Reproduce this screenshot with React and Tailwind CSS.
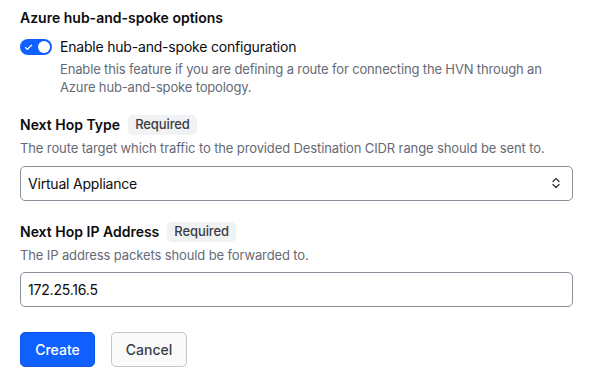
import { Check } from "lucide-react";

const font = { fontFamily: "Inter, 'Noto Sans', sans-serif" };

const Badge = ({ children }) => (
    <span className="inline-flex h-5 items-center rounded-[5px] bg-[#f1f2f3] px-[7px] text-[13px] font-medium tracking-[-0.1px] text-[#3b3d45]">
        {children}
    </span>
);

const FieldLabel = ({ label }) => (
    <div className="flex items-center gap-2">
        <span className="text-[14px] font-semibold leading-5 text-[#0c0c0e]">{label}</span>
        <Badge>Required</Badge>
    </div>
);

const Helper = ({ children }) => (
    <p className="mt-1 text-[13px] leading-[18px] tracking-[-0.12px] text-[#656a76]">{children}</p>
);

const Toggle = () => (
    <button
        type="button"
        aria-pressed="true"
        className="relative flex h-4 w-8 shrink-0 items-center rounded-full bg-[#1060ff]"
    >
        <Check size={9} strokeWidth={3.5} className="absolute left-[4px] text-white" />
        <span className="absolute right-[2px] size-3 rounded-full bg-white" />
    </button>
);

const App = () => {
    return (
        <div className="min-h-screen bg-white pl-5 pr-[21px] pt-2" style={font}>
            <h3 className="text-[14px] font-semibold leading-5 text-[#0c0c0e]">
                Azure hub-and-spoke options
            </h3>

            <div className="mt-[9px]">
                <div className="flex items-center gap-2">
                    <Toggle />
                    <span className="text-[14px] leading-5 tracking-[-0.2px] text-[#0c0c0e]">
                        Enable hub-and-spoke configuration
                    </span>
                </div>
                <p className="ml-10 mt-[3px] text-[13px] leading-[18px] tracking-[-0.15px] text-[#656a76]">
                    Enable this feature if you are defining a route for connecting the HVN through an
                    Azure hub-and-spoke topology.
                </p>
            </div>

            <div className="mt-[19px]">
                <FieldLabel label="Next Hop Type" />
                <Helper>
                    The route target which traffic to the provided Destination CIDR range should be sent to.
                </Helper>
                <div className="relative mt-[9px]">
                    <div className="flex h-[35px] items-center rounded-[5px] border border-[#8c909c] px-[7px] text-[14px] tracking-[-0.2px] text-[#0c0c0e]">
                        Virtual Appliance
                    </div>
                    <svg
                        width="10"
                        height="12"
                        viewBox="0 0 10 12"
                        fill="none"
                        stroke="#3b3d45"
                        strokeWidth="1.4"
                        strokeLinecap="round"
                        strokeLinejoin="round"
                        className="absolute right-[12px] top-[11px]"
                    >
                        <path d="M2 4.5 5 1.5 8 4.5" />
                        <path d="M2 7.5 5 10.5 8 7.5" />
                    </svg>
                </div>
            </div>

            <div className="mt-[21px]">
                <FieldLabel label="Next Hop IP Address" />
                <Helper>The IP address packets should be forwarded to.</Helper>
                <div className="mt-2 flex h-[35px] items-center rounded-[5px] border border-[#8c909c] px-[7px] text-[14px] tracking-[-0.2px] text-[#0c0c0e]">
                    172.25.16.5
                </div>
            </div>

            <div className="mt-[25px] flex gap-4">
                <button
                    type="button"
                    className="h-[35px] w-[75px] rounded-[5px] border border-[#0c56e9] bg-[#1060ff] text-[14px] font-medium text-white"
                >
                    Create
                </button>
                <button
                    type="button"
                    className="h-[35px] w-[76px] rounded-[5px] border border-[#c2c5cb] bg-[#fafafa] text-[14px] font-medium text-[#3b3d45]"
                >
                    Cancel
                </button>
            </div>
        </div>
    );
};

export default App;
